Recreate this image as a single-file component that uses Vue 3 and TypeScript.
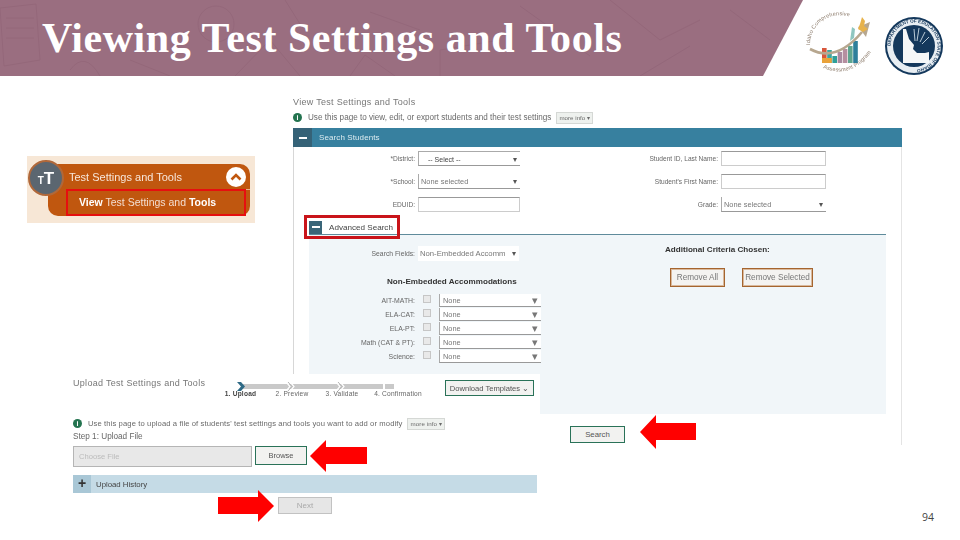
<script setup lang="ts">
const accommodations = ["AIT-MATH:", "ELA-CAT:", "ELA-PT:", "Math (CAT & PT):", "Science:"];
const steps = ["1. Upload", "2. Preview", "3. Validate", "4. Confirmation"];
const bars = [
  { h: 15, c: "#d8573c" },
  { h: 13, c: "#3aa6a0" },
  { h: 7, c: "#2f9f99" },
  { h: 11, c: "#a98aa0" },
  { h: 14, c: "#b58fa0" },
  { h: 17, c: "#5fa58f" },
  { h: 22, c: "#2e7f9b" },
];
</script>

<template>
  <main class="slide">
    <header class="banner">
      <svg class="doodles" width="810" height="76" viewBox="0 0 810 76" fill="none" stroke="#8d6073" stroke-width="1">
        <path d="M0 8 L36 4 L40 60 L4 66 Z M6 18 H34 M6 28 H34 M6 38 H34" />
        <circle cx="216" cy="24" r="18" />
        <path d="M70 70 Q85 50 100 76 M130 60 L170 76 M235 76 L270 40 L300 76" />
        <path d="M285 0 L300 24 M350 76 L365 55 L395 76 M370 12 L420 30 M440 76 V50 L500 40" />
        <path d="M520 6 L590 56 M610 0 L660 40 L700 20 M640 76 L690 46 M730 10 L770 40" />
      </svg>
      <h1>Viewing Test Settings and Tools</h1>
    </header>

    <svg class="logo-idaho" width="78" height="76" viewBox="-6 -4 78 76">
      <defs>
        <path id="arc-top" d="M2 38 C2 16 24 -1 54 14" />
        <path id="arc-bottom" d="M15 61 Q46 74 68 38" />
      </defs>
      <text class="logo-text" fill="#8b7a6a"><textPath href="#arc-top">Idaho Comprehensive</textPath></text>
      <text class="logo-text" fill="#8b7a6a"><textPath href="#arc-bottom">Assessment Program</textPath></text>
      <rect v-for="(b, i) in bars" :key="i" :x="14 + i * 5.2" :y="56 - b.h" width="4.6" :height="b.h" :fill="b.c" />
      <rect x="14" y="51" width="9.8" height="5" fill="#e9a23a" />
      <path d="M2 42 Q28 56 54 25" fill="none" stroke="#b7a78f" stroke-width="2.6" />
      <path d="M50 20 L62 15 L58 30 L55 26 Z" fill="#b7a78f" />
      <path d="M54 10 L57 14 L56 19 L60 22 L55 25 L50 22 L52 17 Z" fill="#e7b24a" />
      <path d="M42 34 L44 20 L47 22 L46 31 Z" fill="#8fc6c0" />
    </svg>

    <svg class="logo-seal" width="60" height="60" viewBox="0 0 60 60">
      <defs><path id="seal-ring" d="M30 30 m-23.5 0 a23.5 23.5 0 1 1 47 0 a23.5 23.5 0 1 1 -47 0" /></defs>
      <circle cx="30" cy="30" r="29" fill="#14385c" />
      <circle cx="30" cy="30" r="27" fill="#e8eef3" />
      <circle cx="30" cy="30" r="21" fill="#14385c" />
      <text class="seal-text" fill="#14385c"><textPath href="#seal-ring">DEPARTMENT OF EDUCATION STATE OF IDAHO</textPath></text>
      <path d="M19 13 L22 13 L25 23 L30 29 L29 33 L33 37 L41 37 L45 36 L45 47 L19 47 Z" fill="#f5f7f8" />
      <path d="M30 13 L31 25 M35 12 L33 25 M41 16 L36 26 M45 21 L38 28" stroke="#b9cad6" stroke-width="1" />
    </svg>

    <section class="menu-shot">
      <div class="menu-card">
        <div class="menu-title">
          <span>Test Settings and Tools</span>
          <span class="chevron">
            <svg width="12" height="8" viewBox="0 0 12 8" fill="none" stroke="#c0570f" stroke-width="2.6"><path d="M1.5 6.5 L6 2 L10.5 6.5" /></svg>
          </span>
        </div>
        <div class="menu-link"><b>View</b> Test Settings and <b>Tools</b></div>
      </div>
      <div class="menu-icon"><small>T</small>T</div>
    </section>

    <section class="view-shot">
      <h2>View Test Settings and Tools</h2>
      <p class="info"><i class="dot">i</i>Use this page to view, edit, or export students and their test settings<span class="more">more info ▾</span></p>
      <div class="bar"><span class="bar-toggle"><i></i></span>Search Students</div>
      <div class="shot-body">
        <div class="search-form">
          <label>*District:</label><div class="sel sharp">-- Select --<em>▾</em></div>
          <label>Student ID, Last Name:</label><div class="field"></div>
          <label>*School:</label><div class="sel">None selected<em>▾</em></div>
          <label>Student's First Name:</label><div class="field"></div>
          <label>EDUID:</label><div class="field"></div>
          <label>Grade:</label><div class="sel">None selected<em>▾</em></div>
        </div>
        <div class="adv-head"><span class="adv-toggle"><i></i></span>Advanced Search</div>
        <div class="adv-panel">
          <div class="adv-left">
            <div class="fields-row"><label>Search Fields:</label><div class="sel plain">Non-Embedded Accomm<em>▾</em></div></div>
            <h3>Non-Embedded Accommodations</h3>
            <div v-for="row in accommodations" :key="row" class="acc-row">
              <label>{{ row }}</label>
              <span class="check"></span>
              <div class="sel small">None<em>▾</em></div>
            </div>
          </div>
          <div class="adv-right">
            <h3>Additional Criteria Chosen:</h3>
            <div class="remove-row">
              <button class="remove all">Remove All</button>
              <button class="remove selected">Remove Selected</button>
            </div>
          </div>
        </div>
        <button class="green search">Search</button>
      </div>
    </section>

    <section class="upload-shot">
      <div class="upload-top">
        <h2>Upload Test Settings and Tools</h2>
        <div class="stepper">
          <div class="track">
            <svg width="157" height="9" viewBox="0 0 157 9">
              <rect x="6" y="2" width="151" height="5" fill="#c9c9c9" />
              <rect x="146" y="1" width="2" height="7" fill="#fff" />
              <path d="M0 0 H4 L8 4.5 L4 9 H0 L4 4.5 Z" fill="#2f6a86" />
              <path d="M50 1 L53 4.5 L50 8 M54 1 L57 4.5 L54 8 M100 1 L103 4.5 L100 8 M104 1 L107 4.5 L104 8" fill="none" stroke="#fff" stroke-width="1.2" />
              <path d="M51 0 L55 4.5 L51 9 M101 0 L105 4.5 L101 9" fill="none" stroke="#b5b5b5" stroke-width="1" />
            </svg>
          </div>
          <div class="step-names">
            <span v-for="(s, i) in steps" :key="s" :class="{ on: i === 0 }">{{ s }}</span>
          </div>
        </div>
        <button class="green download">Download Templates ⌄</button>
      </div>
      <p class="info up"><i class="dot">i</i>Use this page to upload a file of students' test settings and tools you want to add or modify<span class="more">more info ▾</span></p>
      <div class="step-label">Step 1: Upload File</div>
      <div class="file-row">
        <div class="file-box">Choose File</div>
        <button class="green browse">Browse</button>
      </div>
      <div class="history"><span class="hist-toggle">+</span>Upload History</div>
      <div class="next-row"><button class="next">Next</button></div>
    </section>

    <svg class="arrow a-search" width="56" height="34" viewBox="0 0 56 34"><path d="M0 17 L16 0 V8 H56 V25 H16 V34 Z" fill="#f00" /></svg>
    <svg class="arrow a-browse" width="57" height="32" viewBox="0 0 57 32"><path d="M0 16 L16 0 V7 H57 V24 H16 V32 Z" fill="#f00" /></svg>
    <svg class="arrow a-next" width="56" height="32" viewBox="0 0 56 32"><path d="M56 16 L40 0 V7 H0 V24 H40 V32 Z" fill="#f00" /></svg>

    <div class="page-no">94</div>
  </main>
</template>

<style scoped>
.slide {
  position: relative;
  width: 960px;
  height: 540px;
  overflow: hidden;
  background: #fff;
  font-family: "Liberation Sans", Arial, sans-serif;
  color: #555;
}

.banner {
  position: relative;
  height: 76px;
  width: 803px;
  background: #9a6e80;
  clip-path: polygon(0 0, 100% 0, 763px 100%, 0 100%);
}

.doodles {
  position: absolute;
  left: 0;
  top: 0;
  opacity: 0.45;
}

.banner h1 {
  position: relative;
  margin: 0;
  padding: 16px 0 0 42px;
  font-family: "Liberation Serif", serif;
  font-size: 42px;
  line-height: 45px;
  font-weight: 700;
  letter-spacing: 0.55px;
  color: #fff;
}

.logo-idaho {
  position: absolute;
  left: 802px;
  top: 3px;
  filter: blur(0.4px);
}

.logo-text {
  font-size: 5.5px;
  letter-spacing: 0.15px;
}

.logo-seal {
  position: absolute;
  left: 884px;
  top: 16px;
  filter: blur(0.3px);
}

.seal-text {
  font-size: 4.6px;
  font-weight: 700;
}

/* menu screenshot */
.menu-shot {
  position: absolute;
  left: 27px;
  top: 156px;
  width: 228px;
  height: 67px;
  background: #f7e7d6;
  filter: blur(0.35px);
}

.menu-card {
  position: absolute;
  left: 21px;
  top: 8px;
  width: 202px;
  height: 52px;
  border-radius: 10px;
  background: #c0570f;
  color: #f7e6da;
  font-size: 11px;
}

.menu-title {
  display: flex;
  align-items: center;
  justify-content: space-between;
  height: 25px;
  margin-left: 21px;
  padding-right: 4px;
  border-bottom: 1px solid #e8b48f;
}

.chevron {
  display: flex;
  align-items: center;
  justify-content: center;
  width: 20px;
  height: 20px;
  border-radius: 50%;
  background: #fff;
}

.menu-link {
  box-sizing: border-box;
  width: 180px;
  height: 27px;
  margin-left: 18px;
  margin-top: -1px;
  padding-left: 11px;
  border: 2px solid #e60f0f;
  line-height: 23px;
  font-size: 10.5px;
  color: #f3ddd0;
}

.menu-link b {
  color: #fff;
}

.menu-icon {
  position: absolute;
  left: 1px;
  top: 4px;
  box-sizing: border-box;
  width: 36px;
  height: 36px;
  border-radius: 50%;
  border: 2px solid #b0683a;
  background: #5b6670;
  color: #fff;
  font-size: 17px;
  font-weight: 700;
  text-align: center;
  line-height: 34px;
}

.menu-icon small {
  font-size: 10px;
}

/* view screenshot */
.view-shot {
  position: absolute;
  left: 293px;
  top: 95px;
  width: 609px;
  height: 350px;
  filter: blur(0.45px);
}

h2 {
  margin: 0;
  font-size: 9px;
  line-height: 14px;
  font-weight: 400;
  letter-spacing: 0.3px;
  color: #777;
}

.info {
  display: flex;
  align-items: center;
  height: 15px;
  margin: 1px 0 3px;
  font-size: 8.13px;
  color: #6a6a6a;
  white-space: nowrap;
}

.dot {
  display: inline-block;
  width: 9px;
  height: 9px;
  margin-right: 6px;
  border-radius: 50%;
  background: #23734f;
  color: #fff;
  font-size: 7px;
  line-height: 9px;
  text-align: center;
  font-style: normal;
  font-weight: 700;
}

.more {
  margin-left: 5px;
  padding: 0 2px;
  height: 10px;
  line-height: 10px;
  font-size: 6.2px;
  background: #eef1ee;
  border: 1px solid #d5d8d5;
}

.bar {
  display: flex;
  align-items: center;
  height: 19px;
  background: #37809f;
  color: #dcebf1;
  font-size: 8px;
  letter-spacing: 0.1px;
}

.bar-toggle {
  display: flex;
  align-items: center;
  justify-content: center;
  width: 19px;
  height: 19px;
  margin-right: 7px;
  background: #356277;
}

.bar-toggle i,
.adv-toggle i {
  display: block;
  width: 8px;
  height: 2px;
  background: #fff;
}

.shot-body {
  position: relative;
  height: 298px;
  border-left: 1px solid #d7d7d7;
  border-right: 1px solid #e4e4e4;
  box-sizing: border-box;
}

.search-form {
  display: grid;
  grid-template-columns: 121px 102px 1fr 105px;
  grid-auto-rows: 23px;
  column-gap: 3px;
  align-items: center;
  padding: 0 75px 0 0;
  font-size: 6.6px;
  height: 68px;
}

.search-form label,
.fields-row label,
.acc-row label {
  text-align: right;
  white-space: nowrap;
  color: #666;
}

.sel {
  position: relative;
  box-sizing: border-box;
  height: 15px;
  line-height: 15px;
  padding-left: 2px;
  border-left: 1px solid #aaa;
  border-bottom: 1px solid #999;
  font-size: 7.4px;
  color: #777;
  white-space: nowrap;
}

.sel.sharp {
  border-top: 1px solid #aaa;
  color: #444;
  padding-left: 9px;
  font-size: 7px;
}

.sel em {
  position: absolute;
  right: 3px;
  top: 0;
  font-style: normal;
  font-size: 8px;
  color: #555;
}

.sel.plain {
  width: 101px;
  border: 0;
  background: #fff;
  font-size: 7.7px;
}

.sel.small {
  width: 102px;
  height: 13px;
  line-height: 13px;
  background: #fff;
  padding-left: 3px;
  font-size: 7.4px;
}

.sel.small em {
  font-size: 11px;
  color: #777;
}

.field {
  box-sizing: border-box;
  height: 15px;
  border: 1px solid #ccc;
  border-top-color: #999;
  background: #fff;
}

.adv-head {
  box-sizing: border-box;
  display: flex;
  align-items: center;
  width: 96px;
  height: 24px;
  margin: 0 0 -5px 10px;
  padding-left: 2px;
  border: 3px solid #c9141a;
  font-size: 8.1px;
  color: #444;
  white-space: nowrap;
  position: relative;
}

.adv-toggle {
  display: flex;
  align-items: center;
  justify-content: center;
  width: 13px;
  height: 13px;
  margin-right: 7px;
  background: #3a6679;
}

.adv-panel {
  box-sizing: border-box;
  display: flex;
  width: 577px;
  height: 180px;
  margin-left: 15px;
  border-top: 1px solid #5f8b9b;
  background: #f1f6f9;
}

.adv-left {
  width: 232px;
  padding-top: 11px;
  flex: none;
}

.fields-row {
  display: flex;
  align-items: center;
  font-size: 6.8px;
  gap: 3px;
  height: 15px;
}

.fields-row label {
  width: 106px;
}

h3 {
  margin: 0;
  font-size: 8.1px;
  line-height: 12px;
  font-weight: 700;
  color: #333;
  white-space: nowrap;
}

.adv-left h3 {
  margin: 15px 0 5px 78px;
}

.acc-row {
  display: grid;
  grid-template-columns: 106px 8px 102px;
  column-gap: 8px;
  align-items: center;
  height: 14px;
  font-size: 6.9px;
}

.check {
  width: 8px;
  height: 8px;
  margin-top: -2px;
  border: 1px solid #c6c6c6;
  background: #e9e9e9;
  box-sizing: border-box;
}

.adv-right {
  padding: 9px 0 0 124px;
}

.remove-row {
  display: flex;
  gap: 17px;
  margin: 12px 0 0 5px;
}

button {
  font-family: inherit;
  padding: 0;
  white-space: nowrap;
}

.remove {
  height: 19px;
  font-size: 8.2px;
  color: #777;
  background: #f4f3f1;
  border: 1px solid #a5652f;
  box-shadow: inset 0 0 0 1px #d9b99d;
}

.remove.all {
  width: 55px;
}

.remove.selected {
  width: 71px;
}

.green {
  background: #f2f2f0;
  border: 1px solid #2a7258;
  color: #555;
  font-size: 7.8px;
}

.search {
  position: absolute;
  left: 276px;
  bottom: 2px;
  width: 55px;
  height: 17px;
}

/* upload screenshot, pasted over the lower left of the view screenshot */
.upload-shot {
  box-sizing: border-box;
  position: absolute;
  left: 60px;
  top: 374px;
  width: 480px;
  height: 145px;
  padding: 2px 0 0 13px;
  background: #fff;
  filter: blur(0.45px);
}

.upload-top {
  display: flex;
  height: 34px;
}

.upload-top h2 {
  width: 164px;
  flex: none;
}

.stepper {
  width: 208px;
  flex: none;
}

.track {
  height: 9px;
  margin-top: 1px;
}

.step-names {
  display: flex;
  justify-content: flex-start;
  margin: 4px 0 0 -23px;
  font-size: 6.6px;
  letter-spacing: 0.2px;
  color: #666;
  white-space: nowrap;
}

.step-names span {
  width: 50px;
  text-align: center;
}

.step-names span:first-child {
  width: 53px;
}

.step-names span:last-child {
  width: 62px;
}

.step-names .on {
  font-weight: 700;
  color: #444;
}

.download {
  width: 89px;
  height: 16px;
  margin-top: 4px;
  font-size: 7.6px;
}

.info.up {
  margin: 6px 0 0;
  font-size: 7.65px;
  letter-spacing: 0.1px;
}

.step-label {
  margin-top: 0;
  font-size: 8.2px;
  line-height: 12px;
  color: #666;
}

.file-row {
  display: flex;
  gap: 3px;
  margin-top: 3px;
}

.file-box {
  box-sizing: border-box;
  width: 179px;
  height: 21px;
  padding-left: 5px;
  line-height: 19px;
  font-size: 7.6px;
  color: #bbb;
  background: #e8e8e8;
  border: 1px solid #b5b5b5;
}

.browse {
  width: 52px;
  height: 19px;
  font-size: 7.5px;
}

.history {
  display: flex;
  align-items: center;
  width: 464px;
  height: 18px;
  margin-top: 8px;
  background: #c5dbe6;
  color: #444;
  font-size: 7.8px;
}

.hist-toggle {
  width: 18px;
  height: 18px;
  margin-right: 5px;
  line-height: 16px;
  text-align: center;
  background: #a9c7d6;
  font-size: 14px;
  font-weight: 700;
  color: #333;
}

.next-row {
  display: flex;
  padding: 4px 0 0 205px;
}

.next {
  width: 54px;
  height: 17px;
  font-size: 8px;
  color: #aaa;
  background: #e6e6e6;
  border: 1px solid #c2c2c2;
}

.arrow {
  position: absolute;
}

.a-search {
  left: 640px;
  top: 415px;
}

.a-browse {
  left: 310px;
  top: 440px;
}

.a-next {
  left: 218px;
  top: 490px;
}

.page-no {
  position: absolute;
  left: 922px;
  top: 510px;
  font-family: "Open Sans", sans-serif;
  font-size: 10.5px;
  line-height: 14px;
  color: #444;
}
</style>
